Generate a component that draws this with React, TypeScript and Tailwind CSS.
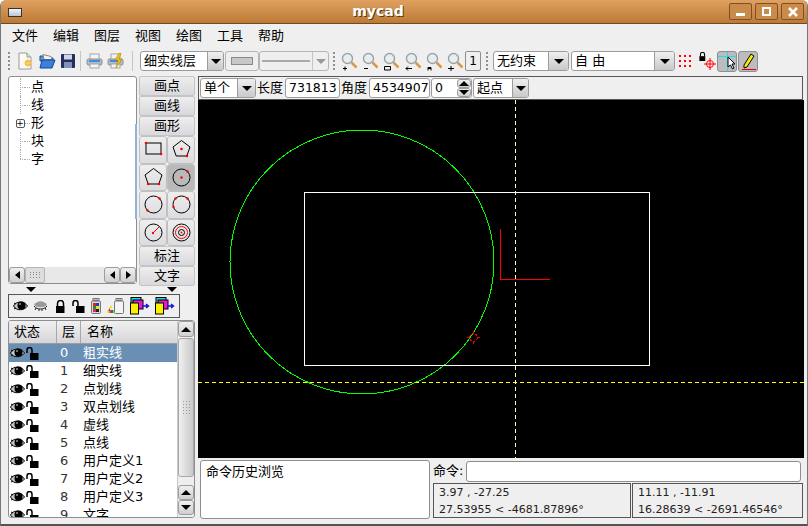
import React from "react"

const FONT = "font-['DejaVu_Sans','Noto_Sans_CJK_SC',sans-serif]"

function Caret({ className = "border-t-black" }: { className?: string }) {
  return <span className={`block h-0 w-0 border-x-[5px] border-t-[5px] border-x-transparent ${className}`} />
}

function Handle() {
  return (
    <div className="mx-[1px] flex h-[20px] w-[3px] flex-col justify-between py-[1px]">
      {[0, 1, 2, 3, 4].map((i) => (
        <span key={i} className="block h-[2px] w-[2px] bg-[#8f8f8f]" />
      ))}
    </div>
  )
}

function Sep() {
  return <div className="h-[20px] w-px bg-[#c6c6c6]" />
}

function Combo({ label, width, arrow = 20 }: { label: string; width: string; arrow?: number }) {
  return (
    <div className={`flex h-[20px] shrink-0 overflow-hidden rounded-[3px] border border-[#9c9c9c] bg-white text-[13px] text-black ${width}`}>
      <span className="flex-1 truncate pl-[3px] leading-[18px]">{label}</span>
      <span className="flex items-center justify-center border-l border-[#9c9c9c] bg-gradient-to-b from-[#efefef] to-[#c9c9cd]" style={{ width: arrow }}>
        <Caret />
      </span>
    </div>
  )
}

function DocIcon() {
  return (
    <svg width="16" height="18" viewBox="0 0 16 18">
      <path d="M2 1h8l4 4v12H2z" fill="#fbfbf4" stroke="#9a9a9a" />
      <path d="M10 1v4h4" fill="#ddd" stroke="#9a9a9a" />
      <circle cx="11" cy="11" r="3.2" fill="#f4b63a" />
      <path d="M11 6.5v9M6.5 11h9" stroke="#f7d774" />
    </svg>
  )
}

function OpenIcon() {
  return (
    <svg width="17" height="16" viewBox="0 0 17 16">
      <path d="M1 3h6l1 2h6v3H1z" fill="#5d95d6" stroke="#1f4d8f" />
      <path d="M4 1.5l8 2 1 3H5z" fill="#f3f3f3" stroke="#888" />
      <path d="M3 7h13l-3 8H1z" fill="#3a80dc" stroke="#12458f" />
    </svg>
  )
}

function SaveIcon() {
  return (
    <svg width="14" height="14" viewBox="0 0 14 14">
      <rect width="14" height="14" rx="1" fill="#23305f" />
      <rect x="3" y="0.5" width="8" height="5" fill="#cfd6e6" />
      <rect x="3" y="8" width="8" height="6" fill="#8391b8" />
    </svg>
  )
}

function PrintIcon({ bolt }: { bolt?: boolean }) {
  return (
    <svg width="17" height="16" viewBox="0 0 17 16">
      <rect x="4" y="1" width="9" height="6" fill="#f4f4f4" stroke="#a5a5a5" />
      <rect x="1" y="6" width="15" height="6" rx="1.5" fill="#b6bac6" stroke="#8c8c96" />
      <rect x="3" y="7" width="11" height="2" fill="#3b8fe0" />
      <rect x="4" y="11" width="9" height="4" fill="#f4f4f4" stroke="#a5a5a5" />
      {bolt && <path d="M12 0l-4 7h3l-2 8 6-9h-3l2-6z" fill="#f4c20d" stroke="#a67c00" strokeWidth="0.5" />}
    </svg>
  )
}

function ZoomIcon({ mark }: { mark: string }) {
  return (
    <svg width="18" height="19" viewBox="0 0 18 19">
      <circle cx="7.5" cy="6.5" r="5" fill="#e6eef2" stroke="#9aa4a8" strokeWidth="1.4" />
      <path d="M11.5 10.5l5 5" stroke="#d9984a" strokeWidth="2.5" />
      <path d={mark} stroke="#000" fill="none" />
    </svg>
  )
}

function EyeIcon({ closed, size = 15 }: { closed?: boolean; size?: number }) {
  return (
    <svg width={size} height={size * 0.8} viewBox="0 0 15 12">
      {closed ? (
        <>
          <path d="M1 5c3-5 10-5 13 0-3 3-10 3-13 0z" fill="#9a9a9a" />
          <path d="M1 6c3 4 10 4 13 0M3 8l-1 2M6 9v2M9 9v2M12 8l1 2" stroke="#222" fill="none" />
        </>
      ) : (
        <>
          <path d="M0.5 6C3 1 11 0.5 14.5 6 11 11 3 11 0.5 6z" fill="#c8c8c8" stroke="#000" />
          <circle cx="8.500" cy="5.500" r="4" fill="#000" />
          <path d="M1 3L3 4M1 9l2-1" stroke="#000" />
          <circle cx="7" cy="4" r="0.8" fill="#fff" />
        </>
      )}
    </svg>
  )
}

function LockIcon({ open, size = 13 }: { open?: boolean; size?: number }) {
  return (
    <svg width={size} height={size} viewBox="0 0 13 13">
      {open ? (
        <path d="M1 6V3a2.5 2.5 0 0 1 5 0v3" fill="none" stroke="#000" strokeWidth="1.5" />
      ) : (
        <path d="M3.5 6V3.5a3 3 0 0 1 6 0V6" fill="none" stroke="#000" strokeWidth="1.5" />
      )}
      <rect x={open ? 4 : 2} y="6" width="8.5" height="7" fill="#000" />
    </svg>
  )
}

function JarIcon({ tri }: { tri?: boolean }) {
  return (
    <svg width={tri ? 18 : 10} height="16" viewBox={tri ? "0 0 18 16" : "0 0 10 16"}>
      {tri && (
        <>
          <path d="M1 15l2.5-5 2.500 5z" fill="#e0218a" />
          <path d="M3.500 10l1.500-3 1.500 3z" fill="#f2e100" />
          <path d="M1 15h2.500v-2H1z" fill="#f2e100" />
          <path d="M5 15h2.500v-3H5z" fill="#1a8f1a" />
        </>
      )}
      <g transform={tri ? "translate(8 0)" : ""}>
        <rect x="2" y="0.5" width="6" height="2" fill="#bbb" stroke="#777" />
        <rect x="0.500" y="3" width="9" height="12.500" rx="1" fill={tri ? "#f4f4f4" : "#d8d8d8"} stroke="#777" />
        {!tri && (
          <>
            <rect x="2" y="5" width="3" height="3" fill="#e02020" />
            <rect x="5" y="5" width="3" height="3" fill="#1d3fd0" />
            <rect x="2" y="8" width="3" height="3" fill="#1a9a1a" />
            <rect x="5" y="8" width="3" height="3" fill="#f2e100" />
            <rect x="2" y="11" width="3" height="3" fill="#e0218a" />
            <rect x="5" y="11" width="3" height="3" fill="#222" />
          </>
        )}
      </g>
    </svg>
  )
}

function LayerMoveIcon() {
  return (
    <svg width="20" height="18" viewBox="0 0 20 18">
      <rect x="1" y="0.500" width="10" height="10" fill="#18d8e0" stroke="#000" />
      <rect x="3" y="3" width="10" height="9" fill="#e818d0" stroke="#000" />
      <rect x="0.500" y="6" width="8" height="11" fill="#fbf000" stroke="#000" />
      <path d="M12 9h6M16 7l2.500 2-2.500 2" stroke="#1010e0" strokeWidth="1.400" fill="none" />
    </svg>
  )
}

const red = "#ff0000"
const toolIcons = [
  <>
    <rect x="5" y="6" width="15" height="11" fill="none" stroke="#000" />
    <circle cx="5" cy="6" r="1.300" fill={red} />
    <circle cx="20" cy="17" r="1.300" fill={red} />
  </>,
  <>
    <path d="M12.500 3.500L21 10l-3.200 9H7.200L4 10z" fill="none" stroke="#000" />
    <circle cx="12.500" cy="12" r="1.300" fill={red} />
    <circle cx="18" cy="19" r="1.300" fill={red} />
  </>,
  <>
    <path d="M12.500 3.500L21 10l-3.200 9H7.200L4 10z" fill="none" stroke="#000" />
    <circle cx="7.200" cy="19" r="1.300" fill={red} />
    <circle cx="18" cy="19" r="1.300" fill={red} />
  </>,
  <>
    <circle cx="12.500" cy="12.500" r="8.500" fill="none" stroke="#000" />
    <circle cx="12.500" cy="12.500" r="1.200" fill={red} />
    <circle cx="18.500" cy="6.500" r="1.200" fill={red} />
  </>,
  <>
    <circle cx="12.500" cy="12.500" r="8.500" fill="none" stroke="#000" />
    <circle cx="18.500" cy="6.500" r="1.200" fill={red} />
    <circle cx="6.500" cy="18.500" r="1.200" fill={red} />
  </>,
  <>
    <circle cx="12.500" cy="12.500" r="8.500" fill="none" stroke="#000" />
    <circle cx="18.500" cy="6.500" r="1.200" fill={red} />
    <circle cx="6.500" cy="6.500" r="1.200" fill={red} />
    <circle cx="4.500" cy="15" r="1.200" fill={red} />
  </>,
  <>
    <circle cx="12.500" cy="12.500" r="8.500" fill="none" stroke="#000" />
    <path d="M12 13l6-6" stroke={red} />
    <circle cx="12" cy="13" r="1.200" fill={red} />
  </>,
  <>
    <circle cx="12.500" cy="12.500" r="8.500" fill="none" stroke="#000" />
    <circle cx="12.500" cy="12.500" r="6" fill="none" stroke={red} />
    <circle cx="12.500" cy="12.500" r="3" fill="none" stroke="#000" />
    <circle cx="12.500" cy="12.500" r="1" fill={red} />
  </>,
]

function ToolButton({ label, h }: { label: string; h: string }) {
  return (
    <div className={`flex w-[56px] items-center justify-center rounded-[2px] border border-[#c4c4c4] bg-gradient-to-b from-[#eeeeee] to-[#d9d9dd] text-[13px] text-black ${h}`}>
      {label}
    </div>
  )
}

function ScrollBtn({ dir, className = "" }: { dir: "l" | "r" | "u" | "d"; className?: string }) {
  const arrow =
    dir === "l"
      ? "border-y-[4px] border-r-[5px] border-y-transparent border-r-black"
      : dir === "r"
        ? "border-y-[4px] border-l-[5px] border-y-transparent border-l-black"
        : dir === "u"
          ? "border-x-[5px] border-b-[5px] border-x-transparent border-b-black"
          : "border-x-[5px] border-t-[5px] border-x-transparent border-t-black"
  return (
    <div className={`flex items-center justify-center rounded-[3px] border border-[#9c9c9c] bg-gradient-to-b from-[#f0f0f0] to-[#cfcfd3] ${className}`}>
      <span className={`block h-0 w-0 ${arrow}`} />
    </div>
  )
}

const layers = ["粗实线", "细实线", "点划线", "双点划线", "虚线", "点线", "用户定义1", "用户定义2", "用户定义3", "文字"]
const tree = ["点", "线", "形", "块", "字"]

function LeftPanel() {
  return (
    <div className="flex w-[197px] shrink-0 flex-col pl-[7px]">
      <div className="flex h-[209px] gap-[2px]">
        <div className="flex h-[208px] w-[129px] flex-col rounded-[3px] border border-[#8e8e8e] bg-white">
          <div className="relative flex-1 pt-[1px]">
            {tree.map((t, i) => (
              <div key={t} className="flex h-[18px] items-center text-[13px] leading-[18px]">
                <span className="relative ml-[6px] flex h-full w-[10px] items-center justify-center">
                  {i === 2 ? (
                    <span className="flex h-[9px] w-[9px] items-center justify-center rounded-[2px] border border-[#555] bg-white text-[9px] leading-none">+</span>
                  ) : (
                    <>
                      <span className={`absolute left-[5px] top-0 border-l border-dotted border-[#aaa] ${i === 4 ? "h-[9px]" : "h-full"}`} />
                      <span className="absolute left-[5px] right-0 top-[9px] border-t border-dotted border-[#aaa]" />
                    </>
                  )}
                </span>
                <span className="mr-[1px] w-[5px] border-t border-dotted border-[#aaa]" />
                <span>{t}</span>
              </div>
            ))}
            <span className="absolute left-[126px] top-[47px] h-[95px] w-[2px] bg-[#8fb4d8]" />
          </div>
          <div className="flex h-[16px] items-stretch bg-[#f0f0f0] p-0">
            <ScrollBtn dir="l" className="w-[16px]" />
            <div className="grid w-[20px] grid-cols-4 place-items-center rounded-[2px] border border-[#b5b5b5] bg-[#dedede] p-[3px]">
              {Array.from({ length: 12 }).map((_, i) => (
                <span key={i} className="block h-px w-px bg-[#888]" />
              ))}
            </div>
            <div className="flex-1 bg-[#e8e8e8]" />
            <ScrollBtn dir="l" className="w-[16px]" />
            <ScrollBtn dir="r" className="w-[16px]" />
          </div>
        </div>
        <div className="flex w-[56px] flex-col">
          <ToolButton label="画点" h="h-[20px]" />
          <ToolButton label="画线" h="h-[20px]" />
          <ToolButton label="画形" h="h-[20px]" />
          <div className="grid grid-cols-2">
            {toolIcons.map((icon, i) => (
              <div
                key={i}
                className={`flex h-[27.5px] w-[28px] items-center justify-center rounded-[3px] border border-[#c0c0c0] ${i === 3 ? "bg-[#b9b9b9]" : "bg-gradient-to-b from-[#eeeeee] to-[#dcdce0]"}`}
              >
                <svg width="25" height="25" viewBox="0 0 25 25">{icon}</svg>
              </div>
            ))}
          </div>
          <ToolButton label="标注" h="h-[20px]" />
          <ToolButton label="文字" h="h-[20px]" />
        </div>
      </div>
      <div className="flex h-[9px] w-[187px] justify-between pl-[18px] pr-[18px] pt-[2px]">
        <span><Caret /></span>
        <span><Caret /></span>
      </div>
      <div className="flex h-[24px] w-[172px] items-center justify-between border border-[#555] px-[4px]">
        <EyeIcon size={15} />
        <EyeIcon closed size={15} />
        <LockIcon size={13} />
        <LockIcon open size={13} />
        <JarIcon />
        <JarIcon tri />
        <LayerMoveIcon />
        <LayerMoveIcon />
      </div>
      <div className="mt-[2px] flex h-[198px] w-[187px] overflow-hidden rounded-[3px] border border-[#8e8e8e] bg-white">
        <div className="flex-1 overflow-hidden">
          <div className="flex h-[23px] border-b border-[#9c9c9c] bg-gradient-to-b from-[#f0f0f0] to-[#d6d6da] text-[13px] leading-[21px]">
            <span className="w-[48px] border-r border-[#a8a8a8] pl-[5px]">状态</span>
            <span className="w-[24px] border-r border-[#a8a8a8] pl-[5px]">层</span>
            <span className="flex-1 pl-[6px]">名称</span>
          </div>
          {layers.map((name, i) => (
            <div key={name} className={`flex h-[18px] items-center text-[13px] leading-[18px] ${i === 0 ? "bg-[#6a8fb5] text-white" : "text-black"}`}>
              <span className="flex w-[48px] items-center gap-[1px] pl-[1px]">
                <EyeIcon />
                <LockIcon open />
              </span>
              <span className="w-[24px] pl-[3px] text-[#333]">
                <span className={i === 0 ? "text-white" : ""}>{i}</span>
              </span>
              <span className="pl-[2px]">{name}</span>
            </div>
          ))}
        </div>
        <div className="flex w-[17px] flex-col border-l border-[#c8c8c8] bg-[#eeeeee]">
          <ScrollBtn dir="u" className="h-[16px]" />
          <div className="mt-[1px] flex h-[139px] items-center justify-center rounded-[3px] border border-[#a8a8a8] bg-gradient-to-r from-[#f0f0f0] to-[#c9c9cd]">
            <div className="grid grid-cols-3 gap-[2px]">
              {Array.from({ length: 15 }).map((_, i) => (
                <span key={i} className="block h-px w-px bg-[#999]" />
              ))}
            </div>
          </div>
          <div className="h-[8px]" />
          <ScrollBtn dir="u" className="h-[15px]" />
          <ScrollBtn dir="d" className="h-[15px]" />
        </div>
      </div>
    </div>
  )
}

function DrawingArea() {
  // coordinates are canvas-local: screen position minus (198, 100)
  return (
    <svg className="block h-[358px] w-[606px] bg-black" viewBox="0 0 606 358" shapeRendering="crispEdges">
      <circle cx="164" cy="162" r="132" fill="none" stroke="#00ff00" />
      <rect x="106.500" y="92.500" width="345" height="173" fill="none" stroke="#ffffff" />
      <path d="M0 282.500H606" stroke="#ffff00" strokeDasharray="4 3" />
      <path d="M317.500 0V358" stroke="#ffffc0" strokeDasharray="4 3" />
      <path d="M302.500 129V179.500H352" fill="none" stroke="#ff0000" />
      <g stroke="#ff0000" fill="none">
        <circle cx="275.500" cy="237.500" r="4" strokeDasharray="3 1" />
        <path d="M269 237.500h3M279 237.500h3M275.500 231v3M275.500 241v3" />
      </g>
    </svg>
  )
}

function BottomBar() {
  return (
    <div className="mt-[2px] flex h-[59px] gap-[3px] pl-[2px]">
      <div className="h-[59px] w-[230px] shrink-0 rounded-[3px] border border-[#8e8e8e] bg-white pl-[5px] text-[13px] leading-[22px]">命令历史浏览</div>
      <div className="flex w-[370px] flex-col">
        <div className="flex h-[22px] items-center">
          <span className="w-[33px] text-[13px]">命令:</span>
          <div className="h-[21px] w-[335px] rounded-[3px] border border-[#8e8e8e] bg-white" />
        </div>
        <div className="mt-[1px] flex gap-[1px] text-[11px] leading-[17px] text-[#222]">
          <div className="h-[35px] w-[198px] border border-[#555] pl-[5px]">
            <div>3.97 , -27.25</div>
            <div>27.53955 &lt; -4681.87896°</div>
          </div>
          <div className="h-[35px] flex-1 border border-[#555] pl-[5px]">
            <div>11.11 , -11.91</div>
            <div className="whitespace-nowrap">16.28639 &lt; -2691.46546°</div>
          </div>
        </div>
      </div>
    </div>
  )
}

export default function App() {
  const input = "flex h-[20px] shrink-0 items-center rounded-[3px] border border-[#9c9c9c] bg-white px-[3px] text-[12.500px]"
  return (
    <div className={`flex h-[526px] w-[808px] flex-col overflow-hidden rounded-t-[6px] border-x border-b-2 border-x-[#777] border-b-[#555] bg-[#efefef] text-black ${FONT}`}>
      {/* title bar */}
      <div className="relative flex h-[24px] shrink-0 items-center justify-center border-b border-[#6e4a1f] bg-gradient-to-b from-[#dfa060] to-[#bd7a35] pr-[52px]">
        <span className="absolute left-[7px] top-[8px] h-[9px] w-[14px] border border-[#333] bg-gradient-to-b from-[#f4f4f4] to-[#b8c4d4]" />
        <span className="text-[14px] font-bold text-white [text-shadow:1px_1px_0_#5a3a10]">mycad</span>
        <div className="absolute right-[3px] top-[3px] flex gap-[3px]">
          {["_", "box", "x"].map((k) => (
            <span key={k} className="flex h-[17px] w-[23px] items-center justify-center rounded-[2px] border border-[#7a5226] bg-[#c98a4a]">
              {k === "_" && <span className="mt-[6px] block h-[3px] w-[9px] bg-white" />}
              {k === "box" && <span className="block h-[9px] w-[9px] border-2 border-white" />}
              {k === "x" && (
                <svg width="10" height="10" viewBox="0 0 10 10"><path d="M1 1l8 8M9 1l-8 8" stroke="#fff" strokeWidth="2.500" /></svg>
              )}
            </span>
          ))}
        </div>
      </div>

      {/* menu bar */}
      <div className="flex h-[23px] shrink-0 items-center gap-[15px] pl-[11px] pt-[1px] text-[13px]">
        {["文件", "编辑", "图层", "视图", "绘图", "工具", "帮助"].map((m) => (
          <span key={m} className="w-[26px]">{m}</span>
        ))}
      </div>

      {/* main toolbar */}
      <div className="flex h-[28px] shrink-0 items-center pl-[6px]">
        <Handle />
        <div className="ml-[5px] flex w-[58px] items-center justify-between"><DocIcon /><OpenIcon /><SaveIcon /></div>
        <div className="mx-[5px]"><Sep /></div>
        <div className="flex w-[38px] items-center justify-between"><PrintIcon /><PrintIcon bolt /></div>
        <div className="ml-[8px] mr-[7px]"><Sep /></div>
        <Combo label="细实线层" width="w-[84px]" arrow={16} />
        <div className="ml-[1px] flex h-[20px] w-[34px] shrink-0 items-center justify-center rounded-[3px] border border-[#b5b5b5]">
          <span className="block h-[8px] w-[22px] border border-[#8a8a8a] bg-[#c8c8c8]" />
        </div>
        <div className="flex h-[20px] w-[70px] shrink-0 overflow-hidden rounded-[3px] border border-[#b5b5b5]">
          <div className="flex flex-1 items-center px-[2px]"><span className="block h-[2px] w-full bg-[#aaa]" /></div>
          <span className="flex w-[16px] items-center justify-center border-l border-[#c4c4c4]"><Caret className="border-t-[#999]" /></span>
        </div>
        <div className="ml-[3px]"><Handle /></div>
        <div className="ml-[3px] flex w-[124px] items-center justify-between">
          <ZoomIcon mark="M3 16.500h4M5 14.500v4" />
          <ZoomIcon mark="M3 16.500h4" />
          <ZoomIcon mark="M2.500 14.500h6v3.500h-6z" />
          <ZoomIcon mark="M2 16.500h6M4 14.500l-2 2 2 2" />
          <ZoomIcon mark="M3 18.500v-3h3v3M3 16.500h3" />
          <ZoomIcon mark="M2 16.500h6M5 14v5" />
        </div>
        <div className="ml-[1px] flex h-[20px] w-[16px] shrink-0 items-center justify-center rounded-[2px] border border-[#8e8e8e] text-[12px]">1</div>
        <div className="ml-[4px]"><Handle /></div>
        <div className="ml-[3px]"><Combo label="无约束" width="w-[76px]" /></div>
        <div className="ml-[2px]"><Combo label="自 由" width="w-[104px]" /></div>
        <svg className="ml-[3px] shrink-0" width="14" height="14" viewBox="0 0 14 14" fill="#ff0000">
          {[1, 6, 11].flatMap((y) => [1, 6, 11].map((x) => <rect key={`${x}-${y}`} x={x} y={y} width="2" height="2" />))}
        </svg>
        <div className="relative ml-[6px] h-[18px] w-[18px] shrink-0">
          <LockIcon size={9} />
          <svg className="absolute left-[6px] top-[6px]" width="12" height="12" viewBox="0 0 12 12">
            <circle cx="6" cy="6" r="3.500" fill="none" stroke="#ff0000" />
            <path d="M6 0v12M0 6h12" stroke="#ff0000" />
          </svg>
        </div>
        <div className="ml-[1px] flex gap-[1px]">
          <div className="h-[21px] w-[20px] overflow-hidden rounded-[3px] border border-[#8e8e8e] bg-[#bcbcc0]">
            <svg width="18" height="19" viewBox="0 0 18 19">
              <path d="M0 4.500h18M9.500 0v19" stroke="#18e0e8" />
              <path d="M10 5v10l2.500-2 2 4 1.500-1-2-4h3z" fill="#fff" stroke="#000" />
            </svg>
          </div>
          <div className="h-[21px] w-[20px] overflow-hidden rounded-[3px] border border-[#8e8e8e] bg-[#bcbcc0]">
            <svg width="18" height="19" viewBox="0 0 18 19">
              <path d="M5 13L12 2l3 2-7 11-3 1z" fill="#f5f000" stroke="#000" />
              <path d="M3 17.500h14" stroke="#e00000" />
            </svg>
          </div>
        </div>
      </div>

      {/* work area */}
      <div className="flex min-h-0 flex-1 pt-[1px]">
        <LeftPanel />
        <div className="flex w-[609px] flex-col">
          <div className="flex h-[24px] w-[605px] shrink-0 items-center border border-[#555] pl-[1px] text-[13px]">
            <Combo label="单个" width="w-[56px]" arrow={18} />
            <span className="ml-[1px] w-[28px] shrink-0">长度</span>
            <div className={`${input} w-[55px]`}>731813</div>
            <span className="ml-[1px] w-[28px] shrink-0">角度</span>
            <div className={`${input} w-[61px]`}>4534907</div>
            <div className="ml-[1px] flex h-[20px] w-[41px] shrink-0 overflow-hidden rounded-[3px] border border-[#9c9c9c] bg-white text-[12.500px]">
              <span className="flex-1 pl-[3px] leading-[18px]">0</span>
              <span className="flex w-[14px] flex-col">
                <ScrollBtn dir="u" className="h-[9px]" />
                <ScrollBtn dir="d" className="h-[9px]" />
              </span>
            </div>
            <div className="ml-[1px]"><Combo label="起点" width="w-[56px]" arrow={16} /></div>
          </div>
          <DrawingArea />
          <BottomBar />
        </div>
      </div>
    </div>
  )
}
